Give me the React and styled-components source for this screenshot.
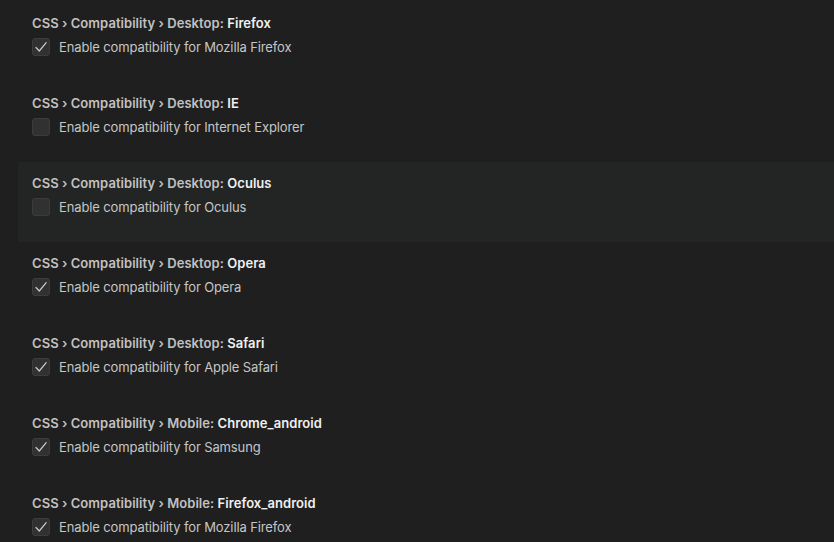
import React from "react";
import styled, { createGlobalStyle } from "styled-components";

const Global = createGlobalStyle`
  html, body { margin: 0; padding: 0; background: #1f1f1f; }
  body { font-family: Inter, "Noto Sans", sans-serif; -webkit-font-smoothing: antialiased; }
`;

const List = styled.div`
  display: flex;
  flex-direction: column;
  padding-top: 2px;
  padding-left: 18px;
`;

const Row = styled.div`
  height: 80px;
  box-sizing: border-box;
  padding: 13px 0 0 14px;
  background: ${(p) => (p.$active ? "#232524" : "transparent")};
`;

const Title = styled.div`
  font-size: 13px;
  font-weight: 600;
  line-height: 16px;
  color: #c2c2c2;
  letter-spacing: 0.05px;
  white-space: nowrap;
`;

const Name = styled.span`
  color: #f0f0f0;
`;

const Line = styled.div`
  display: flex;
  align-items: center;
  gap: 9px;
  margin-top: 6px;
`;

const Box = styled.div`
  width: 18px;
  height: 18px;
  box-sizing: border-box;
  border: 1px solid #3c3c3c;
  border-radius: 3px;
  background: #313131;
  display: flex;
  align-items: center;
  justify-content: center;
  flex-shrink: 0;
`;

const Label = styled.span`
  font-size: 13px;
  line-height: 18px;
  padding-top: 1px;
  color: #c6c6c6;
  letter-spacing: -0.12px;
  white-space: nowrap;
`;

const Check = () => (
  <svg width="14" height="14" viewBox="0 0 14 14" fill="none">
    <path d="M2 7.5 L5.3 11 L12.2 2.6" stroke="#cccccc" strokeWidth="1.2" strokeLinecap="round" strokeLinejoin="round" />
  </svg>
);

const items = [
  { cat: "Desktop", name: "Firefox", desc: "Mozilla Firefox", on: true },
  { cat: "Desktop", name: "IE", desc: "Internet Explorer", on: false },
  { cat: "Desktop", name: "Oculus", desc: "Oculus", on: false, active: true },
  { cat: "Desktop", name: "Opera", desc: "Opera", on: true },
  { cat: "Desktop", name: "Safari", desc: "Apple Safari", on: true },
  { cat: "Mobile", name: "Chrome_android", desc: "Samsung", on: true },
  { cat: "Mobile", name: "Firefox_android", desc: "Mozilla Firefox", on: true },
];

export default function App() {
  return (
    <>
      <Global />
      <List>
        {items.map((it) => (
          <Row key={it.name} $active={it.active}>
            <Title>
              CSS › Compatibility › {it.cat}: <Name>{it.name}</Name>
            </Title>
            <Line>
              <Box>{it.on && <Check />}</Box>
              <Label>Enable compatibility for {it.desc}</Label>
            </Line>
          </Row>
        ))}
      </List>
    </>
  );
}
